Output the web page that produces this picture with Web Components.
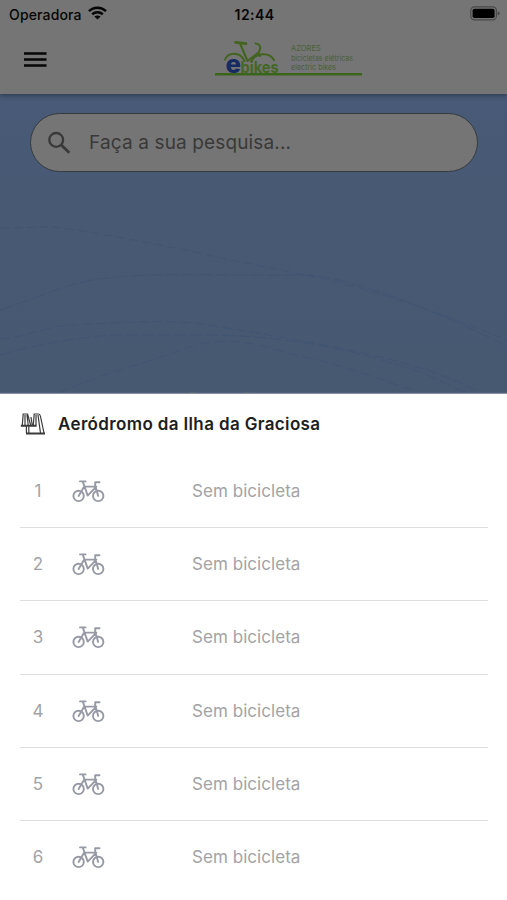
<!DOCTYPE html>
<html lang="pt">
<head>
<meta charset="utf-8">
<title>ebikes</title>
<style>
html,body{margin:0;height:900px;overflow:hidden}
body{font-family:Inter,"Liberation Sans",sans-serif;background:#fff}
</style>
</head>
<body>
<ebikes-app></ebikes-app>
<script>
const define = (name, html) => customElements.define(name, class extends HTMLElement {
  constructor() {
    super();
    this.attachShadow({ mode: 'open' }).innerHTML = html;
  }
});

define('status-bar', `
<style>
:host{display:grid;grid-template-columns:1fr auto 1fr;align-items:center;height:28px;padding:0 7px 0 9px;color:#060606;font-size:14px}
.carrier{display:flex;align-items:center;gap:6px;letter-spacing:.15px;font-weight:450}
.time{font-weight:600;font-size:14px;letter-spacing:.4px}
.bat{justify-self:end;display:block}
svg{display:block;margin-top:-2px}
.bat{margin-top:-1px}
</style>
<div class="carrier"><span>Operadora</span>
<svg width="19" height="14" viewBox="0 0 19 14" fill="none" stroke="#050505" stroke-width="2.5"><path d="M1 5.1C5.7.5 13.3.5 18 5.1M4.2 8.2c3-2.7 7.6-2.7 10.6 0"/><path d="M9.5 13.6L6.4 10.6c1.7-1.5 4.5-1.5 6.2 0z" fill="#050505" stroke="none"/></svg></div>
<span class="time">12:44</span>
<svg class="bat" width="30" height="15" viewBox="0 0 30 15"><rect x=".8" y=".9" width="25.6" height="13" rx="3.6" fill="none" stroke="#484848" stroke-width="1.1"/><rect x="2.6" y="2.7" width="22" height="9.4" rx="1.8" fill="#000"/><path d="M27.7 5.2q2.2 1 2 2.2t-2 2.2z" fill="#484848"/></svg>`);

define('ebikes-logo', `
<style>:host{display:block;width:150px;height:42px}svg{display:block;font-family:Inter,"Liberation Sans",sans-serif}</style>
<svg width="150" height="42" viewBox="0 0 150 42">
<g fill="none" stroke="#42641f" stroke-width="2" stroke-linecap="round" stroke-linejoin="round">
<path d="M10 20.5C13 13 25 12 29.5 22"/><path d="M36 22.5C41 13.5 54 12.5 59 21"/>
<path d="M25.5 5.5L32.5 22L43.5 13.5Q46.5 9 44.5 6.5Q43.5 4.5 40.5 4.5M43.5 13.5L45 17"/>
<path d="M20.5 3.4L31 4.7" stroke-width="2.8"/></g>
<path d="M0 35.3H147" stroke="#3a651a" stroke-width="2.4"/>
<text x="25.6" y="34" font-size="15.5" font-weight="700" fill="#446726" textLength="38" lengthAdjust="spacingAndGlyphs">bikes</text>
<text x="10.5" y="34.3" font-size="25" font-weight="800" fill="#152b62" textLength="15.5" lengthAdjust="spacingAndGlyphs">e</text>
<g fill="#4b6035" font-size="8">
<text x="76" y="12.2" textLength="30" lengthAdjust="spacingAndGlyphs">AZORES</text>
<text x="76" y="21.8" textLength="62" lengthAdjust="spacingAndGlyphs">bicicletas elétricas</text>
<text x="76" y="31.3" textLength="45" lengthAdjust="spacingAndGlyphs">electric bikes</text></g>
</svg>`);

define('app-header', `
<style>
:host{display:block;height:94px;background:#757575;box-shadow:0 1px 5px rgba(20,30,45,.6);position:relative}
.bar{display:flex;align-items:center;height:62px;padding:0 24px}
.menu{flex:none;display:block;width:22.5px;margin-top:1px;margin-right:168.5px}
ebikes-logo{flex:none;margin-top:1px}
</style>
<status-bar></status-bar>
<div class="bar"><svg class="menu" height="17" viewBox="0 0 22.5 17"><path d="M0 2.4H22.5M0 8.5H22.5M0 14.6H22.5" stroke="#060606" stroke-width="2.5"/></svg><ebikes-logo></ebikes-logo></div>`);

define('search-field', `
<style>
:host{box-sizing:border-box;display:flex;align-items:center;gap:17px;height:59px;border:1.5px solid #333b3d;border-radius:30px;background:#757575;padding:0 16px;color:#393939;font-size:19px;letter-spacing:.14px}
svg{display:block;flex:none}
span{margin-top:-1px}
</style>
<svg width="25" height="26" viewBox="0 0 25 26" fill="none" stroke="#393939"><circle cx="9.2" cy="9.9" r="6.9" stroke-width="2.3"/><path d="M14.3 15L22.3 22.8" stroke-width="2.8"/></svg>
<span><slot></slot></span>`);

define('map-view', `
<style>
:host{display:grid;grid-template:300px/507px;height:300px;background:linear-gradient(#485a77,#485973 45%,#475871)}
:host>*{grid-area:1/1}
svg{display:block}
search-field{margin:19px 29px 0 30px;align-self:start}
</style>
<svg width="507" height="300" viewBox="0 0 507 300" fill="none" stroke="#405572" stroke-width="1">
<path stroke-dasharray="9 4" d="M0 134.5Q28 133 55 133C130 143 210 162 300 180C370 193 450 223 507 246"/>
<path stroke-dasharray="14 3" d="M0 216C35 205 80 184 110 184C150 178 220 182 306 181C350 183 430 214 507 252"/>
<path stroke-dasharray="10 4" d="M0 245C30 242 50 231 75 231C130 228 180 224 220 233C320 249 420 266 475 296"/>
<path stroke-dasharray="12 4" d="M0 261C40 249 80 244 110 241H210C285 242 350 254 420 278L467 299"/>
<path stroke-dasharray="10 5" d="M58 299C105 278 150 268 190 253C220 243 255 247 290 260C340 269 376 285 420 298"/>
<path stroke="#6a7a5c" d="M190 299.2h6M244 299.2h5"/>
</svg>
<search-field>Faça a sua pesquisa...</search-field>`);

define('dock-row', `
<style>
:host{box-sizing:border-box;display:grid;grid-template-columns:32px 140px 1fr;align-items:center;height:73.35px;margin:0 19px 0 20px;border-bottom:1.5px solid #dedede;color:#a3a3a5;font-size:17px}
:host(:last-of-type){border-color:transparent}
.n{text-align:center;width:36px}
svg{display:block;margin-left:20px}
.t{letter-spacing:.05px}
</style>
<span class="n"><slot name="number"></slot></span>
<svg width="34" height="26" viewBox="0 0 34 26" fill="none" stroke="#979aa5" stroke-width="1.9" stroke-linejoin="round" stroke-linecap="round"><circle cx="6.6" cy="17.9" r="5.2"/><circle cx="26.2" cy="17.9" r="5.2"/><path d="M6.6 17.9L12.2 8.6H24.4L15.7 17.6L10.8 3.6M8 3.4H13.6M26.2 17.9L23.2 7.5V4.2H27.5"/></svg>
<span class="t"><slot></slot></span>`);

define('station-sheet', `
<style>
:host{display:block;height:506px;background:#fff;position:relative;box-shadow:0 -1px 1px #8490a1}
header{display:flex;align-items:center;gap:12px;height:60.6px;padding-left:20px}
h1{margin:-1px 0 0;font-size:17px;font-weight:600;color:#1e1e20;letter-spacing:.36px}
svg{display:block}
</style>
<header>
<svg width="26" height="24" viewBox="0 0 26 24" fill="none" stroke="#3a3a3a" stroke-width="1.2"><path d="M2.3 13L3.2 2H7.6L10.6 13M5 13V3M7 3L8.2 13M13.3 13L14.2 2H18.6Q20 2 20.5 4.5L24 21M16 13V3M18 3L20.5 21M6.4 14V21M8.8 14V21M12.2 13L11 5"/><path d="M.8 13.7H16.6M6 21.5H25" stroke-width="1.9"/></svg>
<h1>Aeródromo da Ilha da Graciosa</h1></header>
<slot></slot>`);

define('ebikes-app', `
<style>:host{display:block;width:507px;height:900px;overflow:hidden}</style>
<app-header></app-header>
<map-view></map-view>
<station-sheet>${[1,2,3,4,5,6].map(n => `<dock-row><span slot="number">${n}</span>Sem bicicleta</dock-row>`).join('')}</station-sheet>`);
</script>
</body>
</html>
